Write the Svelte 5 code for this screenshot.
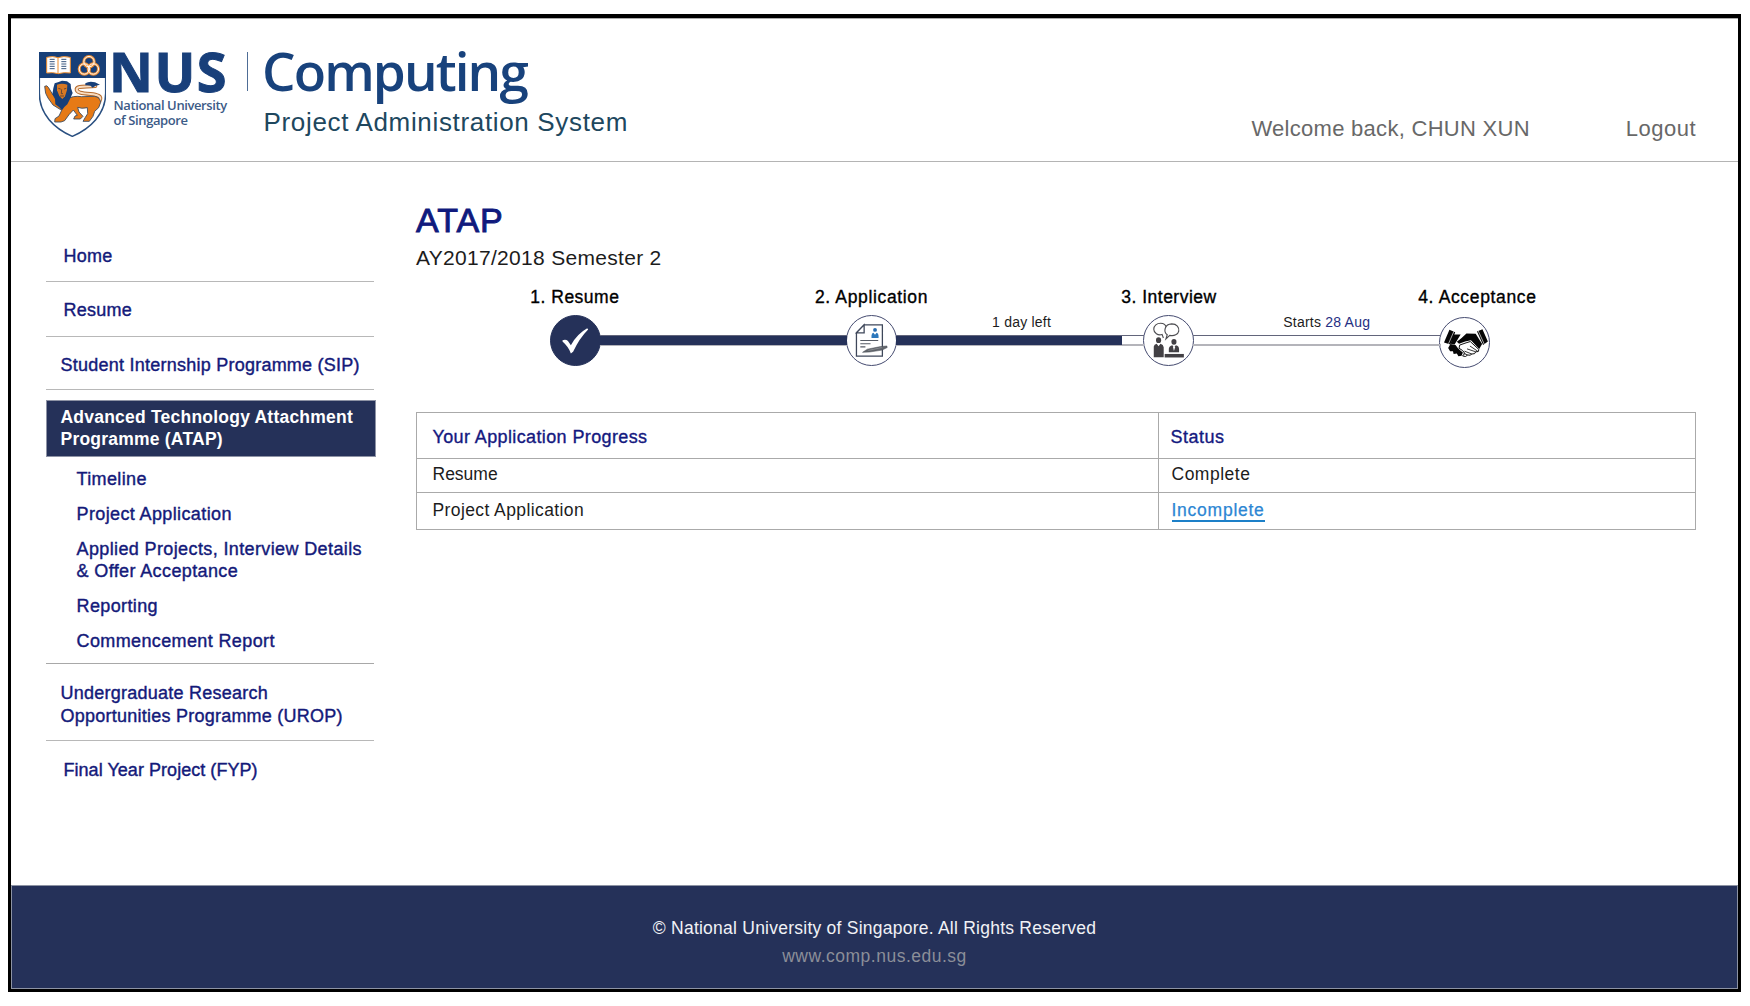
<script>
  const subItems = [
    ['Timeline'],
    ['Project Application'],
    ['Applied Projects, Interview Details', '& Offer Acceptance'],
    ['Reporting'],
    ['Commencement Report']
  ];

  const steps = [
    { label: '1. Resume', icon: 'check', progress: 100 },
    { label: '2. Application', icon: 'document', progress: 91, note: '1 day left' },
    { label: '3. Interview', icon: 'interview', progress: 0, note: 'Starts', date: '28 Aug' },
    { label: '4. Acceptance', icon: 'handshake' }
  ];
</script>

<div class="frame">
  <header>
    <div class="brand">
      <svg class="shield" viewBox="42 36 201 255" aria-hidden="true">
        <path d="M43 37H242V160C242 222 196 266 142 289C88 266 43 222 43 160Z" fill="#fff" stroke="#294f80" stroke-width="4.5" />
        <path d="M42 36H243V114H42Z" fill="#173f78" />
        <path d="M65 52Q84 47 99 53Q116 47 136 52V99Q117 96 100 101Q83 96 65 99Z" fill="#fff" stroke="#ec8b2b" stroke-width="3" />
        <path d="M99 53V101" stroke="#ec8b2b" stroke-width="3" />
        <path d="M74 58h15M74 65h15M74 72h15M74 79h15M74 86h15M109 58h15M109 65h15M109 72h15M109 79h15M109 86h15" stroke="#3a577f" stroke-width="3" />
        <g fill="none">
          <g stroke="#ef8d31" stroke-width="9"><circle cx="192" cy="65" r="15.500" /><circle cx="178" cy="87" r="15.500" /><circle cx="205" cy="87" r="15.500" /></g>
          <g stroke="#fff" stroke-width="3"><circle cx="192" cy="65" r="15.500" /><circle cx="178" cy="87" r="15.500" /><circle cx="205" cy="87" r="15.500" /></g>
        </g>
        <path d="M224 182C232 168 216 164 196 162C170 160 154 158 155 147C157 137 180 141 211 138" fill="none" stroke="#b56a2c" stroke-width="12" stroke-linecap="round" />
        <path d="M224 182C232 168 216 164 196 162C170 160 154 158 155 147C157 137 180 141 211 138" fill="none" stroke="#f8dcc0" stroke-width="6" stroke-linecap="round" />
        <path d="M181 130Q193 122 210 127L225 134Q211 136 202 143Q198 134 181 136Z" fill="#173f78" />
        <path d="M59 139Q66 134 70 142L84 165L100 177L125 178Q143 166 170 170L208 169Q225 171 227 187L221 203L209 214L204 229L193 244H174L181 232L188 221L187 203Q169 207 158 202L162 216L174 229L166 237H146L150 228L157 226L145 210L132 224L119 242L108 246H89L90 236L102 228L110 211L84 195L69 174L62 160Z" fill="#e67a16" stroke="#31465f" stroke-width="2.500" />
        <path d="M89 130L101 126L111 122L126 124L137 132L138 145L143 159L135 177L127 193L118 201L111 211L102 201L91 193L90 177L82 163L85 145Z" fill="#173f78" />
        <path d="M96 134Q111 128 127 134L126 150L120 169L112 177L103 168L96 151Z" fill="#d87924" />
        <path d="M100 145l7 2M117 147l7-2M110 148l-1 13 5 0M105 168l12 0" stroke="#523e39" stroke-width="2.500" fill="none" />
      </svg>
      <div class="nus">
        <span class="acronym">NUS</span>
        <span class="university">National University<br />of Singapore</span>
      </div>
      <span class="divider"></span>
      <div class="product">
        <span class="computing">Computing</span>
        <span class="system">Project Administration System</span>
      </div>
    </div>
    <div class="account">
      <span>Welcome back, CHUN XUN</span>
      <span class="logout">Logout</span>
    </div>
  </header>

  <div class="body">
    <nav>
      <div class="item home">Home</div>
      <div class="item resume">Resume</div>
      <div class="item sip">Student Internship Programme (SIP)</div>
      <div class="active">Advanced Technology Attachment<br />Programme (ATAP)</div>
      <div class="sub">
        {#each subItems as lines}
          <div>{#each lines as line}<span>{line}</span>{/each}</div>
        {/each}
      </div>
      <div class="item urop">Undergraduate Research<br />Opportunities Programme (UROP)</div>
      <div class="item fyp">Final Year Project (FYP)</div>
    </nav>

    <main>
      <h1>ATAP</h1>
      <p class="term">AY2017/2018 Semester 2</p>

      <div class="labels">
        {#each steps as step}
          <span class={step.icon}>{step.label}</span>
        {/each}
      </div>
      <div class="rail">
        {#each steps as step}
          <div class="node {step.icon}">
            {#if step.icon === 'check'}
              <svg viewBox="149 135 153 153"><path d="M185 211Q195 207 202 213L211 226Q230 191 262 173L265 177Q237 205 218 247L211 252Q204 232 185 215Z" fill="#fff" /></svg>
            {:else if step.icon === 'document'}
              <svg viewBox="48.5 45.5 153 153">
                <path d="M159 73V171H78V98L102 73Z" fill="#fff" stroke="#3e475a" stroke-width="4" />
                <path d="M102 73V98H78Z" fill="#fff" stroke="#3e475a" stroke-width="4" />
                <circle cx="136" cy="89" r="6" fill="#286caf" />
                <path d="M125 114V106Q126 99 131 98L136 104L141 98Q147 100 147 107V114Z" fill="#2d78bc" />
                <path d="M90 122H146M90 132H122M90 142H106" stroke="#555b65" stroke-width="3.500" />
                <path d="M97 159L112 149L153 141L173 139L174 144L158 152L119 158Z" fill="#62666c" stroke="#40454d" stroke-width="1.500" />
                <path d="M115 153L157 144" stroke="#aeb1b5" stroke-width="1.500" />
              </svg>
            {:else if step.icon === 'interview'}
              <svg viewBox="38.500 46.500 153 153">
                <g fill="#fff" stroke="#4c4c50" stroke-width="3.500">
                  <path d="M99 115L95 104C82 109 69 99 69 88C69 76 79 69 90 69C100 69 107 75 109 84" />
                  <path d="M107 118L111 105C98 95 103 72 125 71C141 71 149 82 147 94C145 104 133 110 119 107Z" />
                </g>
                <g fill="#424044"><ellipse cx="84" cy="122" rx="8" ry="9" /><path d="M69 175V142Q70 134 78 133L84 141L90 133Q99 135 100 144V175Z" /><ellipse cx="132" cy="127" rx="8" ry="9" /><path d="M116 160V149Q117 140 127 138L132 146L138 138Q148 140 148 150V160Z" /><path d="M103 165H163V176H103Z" /></g>
                <path d="M129 143L132 156L136 143" fill="#fff" />
              </svg>
            {:else}
              <svg viewBox="-76.500 -76.500 153 153">
                <path d="M-47 -40L-29 -32L-44 6L-64 0ZM39 -34L56 -41L73 -3L58 8Z" fill="#060606" />
                <path d="M-37 -25L-12 -25L-31 6L-43 4ZM-9 -14L6 -28L35 -27L55 5L46 20L20 -7L2 -3L-17 4L-24 -2Z" fill="#060606" />
                <path d="M-44 5L-51 17L-45 27L-36 27L-34 36L-24 34L-19 43L-9 41L-5 31L-14 24L-21 17L-28 8Z" fill="#060606" />
                <path d="M-15 8L5 1L18 -3L45 22Q46 31 35 29Q34 37 23 36Q18 42 10 39Q4 47 -6 42L1 34L-6 25L-17 18Z" fill="#fff" stroke="#060606" stroke-width="3" />
                <path d="M8 20L35 29M0 27L23 36M-3 34L10 39M17 11L41 27" stroke="#060606" stroke-width="2.500" />
                <path d="M-33 -35L-50 4M43 -36L62 6" stroke="#fff" stroke-width="2" />
              </svg>
            {/if}
          </div>
          {#if step.progress !== undefined}
            <div class="link">
              <div class="track"><div class="fill" style="width: {step.progress}%"></div></div>
              {#if step.note}
                <span class="note" class:later={step.date}>{step.note}{#if step.date}&nbsp;<em>{step.date}</em>{/if}</span>
              {/if}
            </div>
          {/if}
        {/each}
      </div>

      <div class="table">
        <div class="row head"><span>Your Application Progress</span><span>Status</span></div>
        <div class="row first"><span>Resume</span><span>Complete</span></div>
        <div class="row last"><span class="spaced">Project Application</span><span><a>Incomplete</a></span></div>
      </div>
    </main>
  </div>

  <footer>
    <span>© National University of Singapore. All Rights Reserved</span>
    <span class="site">www.comp.nus.edu.sg</span>
  </footer>
</div>

<style>
  :global(body) { margin: 0; background: #fff; }
  .frame {
    box-sizing: border-box;
    width: 1733px;
    height: 978px;
    margin: 14px 0 0 8px;
    border: 3px solid #000;
    border-top-width: 4px;
    display: flex;
    flex-direction: column;
    font-family: "Liberation Sans", Arial, sans-serif;
    font-size: 17.5px;
    color: #1c1c1c;
    white-space: nowrap;
  }
  header {
    box-sizing: border-box;
    height: 144px;
    border-top: 1px solid #aaa;
    border-bottom: 1px solid #b4b4b4;
    display: flex;
    justify-content: space-between;
    padding-left: 28px;
    padding-right: 42px;
  }
  .brand { display: flex; align-items: flex-start; padding-top: 33px; }
  .shield { width: 67px; height: 85px; }
  .nus { box-sizing: border-box; width: 141px; padding-left: 3px; display: flex; flex-direction: column; color: #183f7a; }
  .acronym { font: 700 54px/38px "Open Sans", sans-serif; letter-spacing: 1.500px; -webkit-text-stroke: 1px currentColor; }
  .university { font: 600 13px/15px "Open Sans", sans-serif; letter-spacing: -.4px; margin-top: 8px; padding-left: 4.500px; color: #3c5b87; }
  .divider { width: 1px; height: 39px; background: #4e6d96; }
  .product { padding-left: 15.500px; display: flex; flex-direction: column; }
  .computing { font: 600 53px/38px "Open Sans", sans-serif; letter-spacing: -1.900px; margin-left: -1.500px; color: #18427c; }
  .system { font-size: 26px; line-height: 30px; margin-top: 17px; letter-spacing: .66px; color: #20475e; }
  .account { display: flex; padding-top: 96px; font-size: 22px; line-height: 28px; letter-spacing: .28px; color: #686868; }
  .logout { margin-left: 96px; letter-spacing: .48px; }
  .body { flex: 1; display: flex; }
  nav {
    width: 328px;
    margin-left: 34.500px;
    font-size: 18px;
    line-height: 22.5px;
    letter-spacing: .24px;
    color: #141a7a;
    -webkit-text-stroke: .4px currentColor;
  }
  .item { padding: 17.75px 0 13.75px 15px; border-bottom: 1px solid #b8b8b8; }
  .home { padding: 82.75px 0 13.25px 18px; }
  .resume { padding-left: 18px; }
  .sip { padding-bottom: 12.25px; }
  .active {
    box-sizing: border-box;
    height: 57px;
    margin: 9.500px -2px 0 .5px;
    padding: 5.75px 0 0 13.5px;
    background: #253159;
    color: #fff;
    border: 1px solid #8e93a5;
    font-size: 17.5px;
    font-weight: 700;
    line-height: 22px;
    letter-spacing: .22px;
    -webkit-text-stroke: 0;
  }
  .sub { display: flex; flex-direction: column; gap: 12.5px; padding: 11.25px 0 9.75px 31px; border-bottom: 1px solid #a8a8a8; letter-spacing: .38px; }
  .sub span { display: block; }
  .urop { padding-top: 18.75px; padding-bottom: 13px; }
  .fyp { border: 0; padding-left: 18px; letter-spacing: .04px; }
  main { margin-left: 42.500px; padding-top: 38px; width: 1280px; }
  h1 { margin: 0; font-size: 34px; line-height: 40px; font-weight: 400; letter-spacing: 1px; color: #101a7d; -webkit-text-stroke: .9px currentColor; }
  .term { margin: 4px 0 0; font-size: 21px; line-height: 28px; letter-spacing: .3px; }
  .labels {
    display: grid;
    grid-template-columns: repeat(4, 296.7px);
    margin: 15px 0 8px 10.500px;
    line-height: 20px;
    text-align: center;
    color: #000;
    letter-spacing: .65px;
    -webkit-text-stroke: .35px currentColor;
  }
  .labels .check { letter-spacing: .5px; }
  .labels .application { letter-spacing: .7px; }
  .labels .interview { letter-spacing: .5px; padding-left: 1.500px; }
  .labels .handshake { padding-left: 25px; }
  .rail { display: flex; margin-left: 133.500px; height: 51px; }
  .node { box-sizing: border-box; width: 51px; height: 51px; flex: none; border: 1px solid #454b70; border-radius: 50%; background: #fff; }
  .node svg { display: block; width: 49px; height: 49px; }
  .node.check { background: #253159; border-color: #253159; }
  .rail .handshake { margin-top: 2px; margin-left: -.7px; }
  .link { width: 245.700px; flex: none; position: relative; padding-top: 20px; }
  .track { height: 8px; margin: 0 -1px; border-top: 1px solid #62657b; border-bottom: 2px solid #b4b4ba; }
  .fill { height: 9px; background: #253159; }
  .note { position: absolute; top: -1px; left: 0; right: 0; text-align: center; font-size: 14px; line-height: 16px; letter-spacing: .22px; padding-left: 3px; }
  .later { padding-left: 20px; }
  em { font-style: normal; color: #252f83; }
  .table { box-sizing: border-box; margin-top: 45.500px; width: 1280px; height: 118px; border: 1px solid #aaa; display: flex; flex-direction: column; line-height: 20px; }
  .row { display: grid; grid-template-columns: 741px 1fr; box-sizing: border-box; border-bottom: 1px solid #aaa; }
  .row > span { padding-left: 15.500px; }
  .row > span + span { border-left: 1px solid #aaa; padding-left: 12.500px; letter-spacing: .5px; }
  .head { height: 46px; font-size: 18px; color: #14197f; -webkit-text-stroke: .35px currentColor; }
  .head > span { padding-top: 14px; letter-spacing: .38px; }
  .head > span + span { padding-left: 11.500px; }
  .first { height: 34px; }
  .first > span { padding-top: 5px; }
  .last { flex: 1; border: 0; }
  .last > span { padding-top: 7px; }
  .spaced { letter-spacing: .4px; }
  a { display: inline-block; line-height: 20px; border-bottom: 2px solid #1d80c8; color: #2c86d3; letter-spacing: .75px; -webkit-text-stroke: .25px currentColor; }
  footer {
    box-sizing: border-box;
    height: 104px;
    background: #253159;
    border: 1px solid #8d93a3;
    padding-top: 32px;
    display: flex;
    flex-direction: column;
    align-items: center;
    line-height: 20px;
    letter-spacing: .24px;
    color: #f1f2f6;
  }
  .site { margin-top: 8px; letter-spacing: .5px; color: #8b8e98; }
</style>
